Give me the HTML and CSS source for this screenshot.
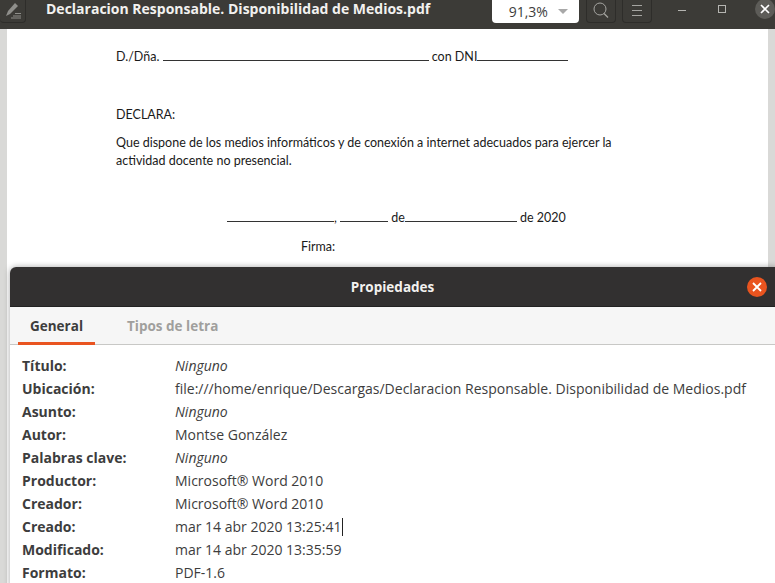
FILE: index.html
```html
<!DOCTYPE html>
<html lang="es">
<head>
    <meta charset="UTF-8">
    <title>Declaracion Responsable. Disponibilidad de Medios.pdf</title>
    <link rel="stylesheet" href="styles.css">
</head>
<body>
    <div class="window">
        <div class="titlebar">
            <button class="tool-button annotate">
                <svg width="20" height="20" viewBox="0 0 20 20"><path d="M3 15 L5 10 L12 2 L15 5 L7 13 Z" fill="#8f8f8b"/><path d="M10 15h8M12 12.500h6M8 17h10" stroke="#8f8f8b" stroke-width="1"/></svg>
            </button>
            <div class="doc-title">Declaracion Responsable. Disponibilidad de Medios.pdf</div>
            <div class="zoom-box"><span>91,3%</span><i class="caret"></i></div>
            <button class="tool-button square">
                <svg width="18" height="18" viewBox="0 0 18 18"><circle cx="8" cy="7" r="6" fill="none" stroke="#a5a5a1" stroke-width="1"/><path d="M12 11.500 L16 15.500" stroke="#a5a5a1" stroke-width="1.300"/></svg>
            </button>
            <button class="tool-button square">
                <svg width="12" height="14" viewBox="0 0 12 14"><path d="M1 1.500h10M1 6.500h10M1 11.500h10" stroke="#a5a5a1" stroke-width="1"/></svg>
            </button>
            <div class="win-controls">
                <span class="win-min"></span>
                <span class="win-max"></span>
                <span class="win-close">
                    <svg width="10" height="10" viewBox="0 0 10 10"><path d="M1 1L9 9M9 1L1 9" stroke="#fff" stroke-width="1.600"/></svg>
                </span>
            </div>
        </div>
        <div class="viewer">
            <div class="page">
                <p class="line name-line">D./Dña. <u class="blank w-name"></u> con DNI<u class="blank w-dni"></u></p>
                <p class="line declara">DECLARA:</p>
                <p class="line body-text">Que dispone de los medios informáticos y de conexión a internet adecuados para ejercer la actividad docente no presencial.</p>
                <p class="line date-line"><u class="blank w-place"></u>, <u class="blank w-day"></u> de<u class="blank w-month"></u> de 2020</p>
                <p class="line firma">Firma:</p>
            </div>
        </div>
    </div>

    <div class="dialog">
        <div class="dialog-header">
            <span class="dialog-title">Propiedades</span>
            <span class="dialog-close">
                <svg width="10" height="10" viewBox="0 0 10 10"><path d="M1 1L9 9M9 1L1 9" stroke="#fff" stroke-width="1.800"/></svg>
            </span>
        </div>
        <div class="tabs">
            <div class="tab active">General</div>
            <div class="tab">Tipos de letra</div>
        </div>
        <div class="props">
            <div class="prop-label">Título:</div><div class="prop-value empty">Ninguno</div>
            <div class="prop-label">Ubicación:</div><div class="prop-value">file:///home/enrique/Descargas/Declaracion Responsable. Disponibilidad de Medios.pdf</div>
            <div class="prop-label">Asunto:</div><div class="prop-value empty">Ninguno</div>
            <div class="prop-label">Autor:</div><div class="prop-value">Montse González</div>
            <div class="prop-label">Palabras clave:</div><div class="prop-value empty">Ninguno</div>
            <div class="prop-label">Productor:</div><div class="prop-value">Microsoft® Word 2010</div>
            <div class="prop-label">Creador:</div><div class="prop-value">Microsoft® Word 2010</div>
            <div class="prop-label">Creado:</div><div class="prop-value"><span class="cursor">mar 14 abr 2020 13:25:41</span></div>
            <div class="prop-label">Modificado:</div><div class="prop-value">mar 14 abr 2020 13:35:59</div>
            <div class="prop-label">Formato:</div><div class="prop-value">PDF-1.6</div>
        </div>
    </div>
</body>
</html>
```

FILE: styles.css
```css
* {
    box-sizing: border-box;
}

html, body {
    margin: 0;
    height: 100%;
    overflow: hidden;
}

body {
    position: relative;
    width: 775px;
    height: 583px;
    background: #d9d9d7;
    font-family: "Open Sans", "Noto Sans", sans-serif;
}

.titlebar {
    height: 29px;
    background: #3c3b37;
    display: flex;
    align-items: flex-start;
}

.tool-button {
    height: 23px;
    padding: 0;
    background: #3c3b37;
    border: 1px solid #2e2d2a;
    border-top: none;
    border-radius: 0 0 4px 4px;
    display: flex;
    align-items: center;
    justify-content: center;
}

.annotate {
    width: 26px;
    border-left: none;
    flex-shrink: 0;
}

.square {
    width: 30px;
    margin-left: 6px;
    flex-shrink: 0;
}

.doc-title {
    width: 456px;
    margin-left: 20px;
    line-height: 17px;
    color: #f2f1ef;
    font-size: 14px;
    font-weight: 700;
    white-space: nowrap;
}

.zoom-box {
    width: 89px;
    height: 23px;
    margin-right: 1px;
    background: #fff;
    border-radius: 0 0 4px 4px;
    display: flex;
    align-items: center;
    color: #3d3d3d;
    font-size: 14px;
    padding-left: 17px;
    gap: 10px;
}

.caret {
    width: 0;
    height: 0;
    border-left: 5px solid transparent;
    border-right: 5px solid transparent;
    border-top: 5px solid #a8a8a8;
}

.win-controls {
    display: flex;
    align-items: center;
    margin-left: 26px;
    height: 18px;
}

.win-min {
    width: 8px;
    border-top: 1px solid #b5b5b1;
    margin-top: 2px;
}

.win-max {
    width: 8px;
    height: 8px;
    border: 1px solid #b5b5b1;
    margin-left: 32px;
}

.win-close {
    width: 20px;
    height: 20px;
    border-radius: 50%;
    background: #5d5c58;
    margin-left: 29px;
    display: flex;
    align-items: center;
    justify-content: center;
}

.viewer {
    height: 554px;
    padding: 0 7px;
}

.page {
    height: 100%;
    background: #fff;
    padding: 19px 0 0 109px;
    font-family: "Lato", "Liberation Sans", sans-serif;
    font-size: 12.500px;
    color: #1a1a1a;
}

.line {
    margin: 0;
    line-height: 18px;
}

.blank {
    display: inline-block;
    border-bottom: 1px solid #333;
    height: 12px;
    text-decoration: none;
}

.w-name { width: 266px; }
.w-dni { width: 91px; }
.w-place { width: 107px; }
.w-day { width: 48px; }
.w-month { width: 112px; }

.declara {
    margin-top: 40px;
}

.body-text {
    margin-top: 10px;
    width: 540px;
}

.date-line {
    margin-top: 39px;
    margin-left: 111px;
}

.firma {
    margin-top: 11px;
    margin-left: 185px;
}

.dialog {
    position: absolute;
    left: 10px;
    top: 267px;
    width: 770px;
    height: 320px;
    background: #fff;
    border-radius: 6px 6px 0 0;
    box-shadow: 0 0 6px rgba(0,0,0,0.35);
    overflow: hidden;
}

.dialog-header {
    height: 40px;
    background: #323030;
    border-bottom: 1px solid #222;
    display: flex;
    align-items: center;
    justify-content: center;
    position: relative;
    padding-right: 5px;
}

.dialog-title {
    color: #f2f1ef;
    font-size: 13.500px;
    font-weight: 700;
}

.dialog-close {
    position: absolute;
    left: 737px;
    top: 10px;
    width: 20px;
    height: 20px;
    border-radius: 50%;
    background: #e9541f;
    display: flex;
    align-items: center;
    justify-content: center;
}

.tabs {
    height: 38px;
    background: #f6f6f6;
    border-bottom: 1px solid #c8c8c6;
    display: flex;
    padding-left: 8px;
}

.tab {
    height: 38px;
    padding: 10px 12px 0;
    font-size: 13.500px;
    font-weight: 700;
    color: #a09f9d;
    margin-right: 20px;
}

.tab.active {
    color: #3d3d3d;
    border-bottom: 3px solid #e95420;
}

.props {
    display: grid;
    grid-template-columns: 153px 1fr;
    grid-auto-rows: 23px;
    padding: 9px 0 0 12px;
    font-size: 14px;
    line-height: 23px;
    color: #3d3d3d;
}

.prop-label {
    font-weight: 700;
}

.prop-value {
    white-space: nowrap;
}

.empty {
    font-style: italic;
}

.cursor {
    border-right: 1px solid #222;
    display: inline-block;
    line-height: 18px;
}
```
